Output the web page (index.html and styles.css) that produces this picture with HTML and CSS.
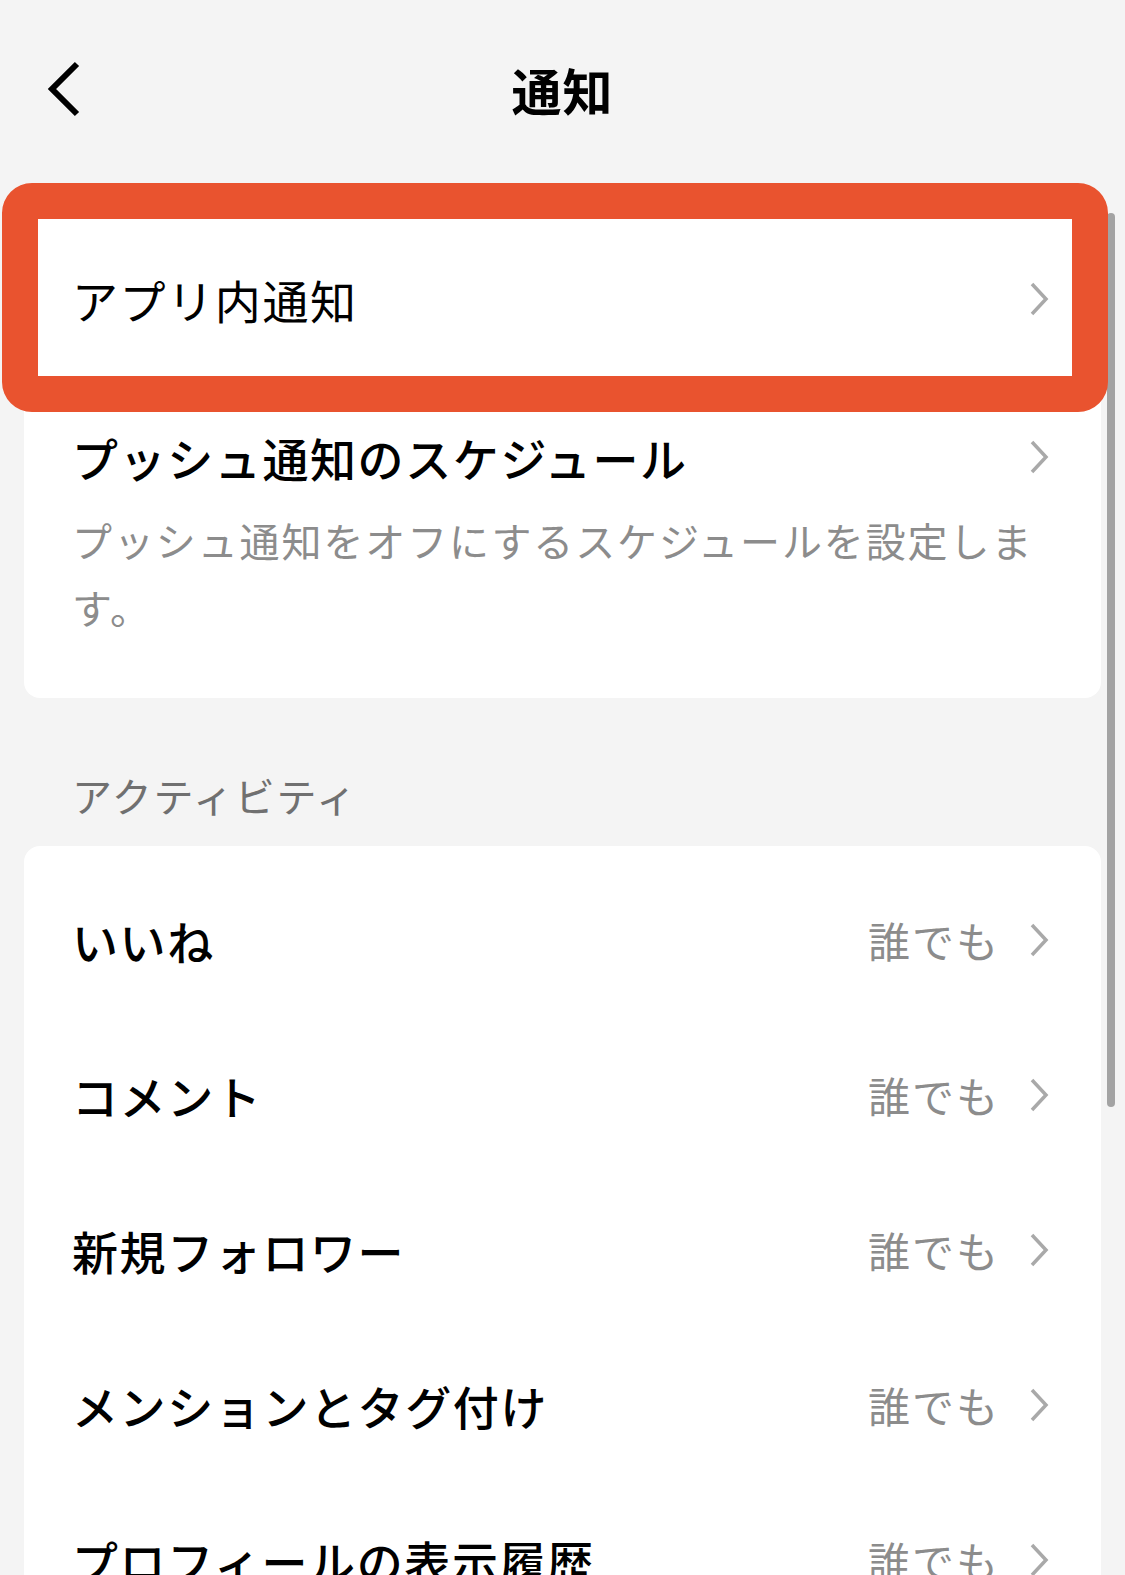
FILE: index.html
```html
<!DOCTYPE html>
<html lang="ja">
<head>
	<meta charset="UTF-8">
	<title>通知</title>
	<link rel="stylesheet" href="styles.css">
</head>
<body>
	<div class="page">
		<div class="header">
			<span class="back">
				<svg width="36" height="56" viewBox="0 0 36 56"><path d="M31 3 L6 28 L31 53" fill="none" stroke="#000" stroke-width="6"/></svg>
			</span>
			<h1 class="title">通知</h1>
			<span></span>
		</div>

		<div class="card first">
			<div class="row row-top">
				<span class="name light">アプリ内通知</span>
				<span class="arrow"><svg width="22" height="36" viewBox="0 0 22 36"><path d="M4 3 L18 18 L4 33" fill="none" stroke="#a9a9a9" stroke-width="3.5"/></svg></span>
			</div>
			<div class="row-desc">
				<div class="desc-head">
					<span class="name">プッシュ通知のスケジュール</span>
					<span class="arrow"><svg width="22" height="36" viewBox="0 0 22 36"><path d="M4 3 L18 18 L4 33" fill="none" stroke="#a9a9a9" stroke-width="3.5"/></svg></span>
				</div>
				<p class="desc">プッシュ通知をオフにするスケジュールを設定します。</p>
			</div>
			<span class="mark"></span>
		</div>

		<div class="section">アクティビティ</div>

		<div class="card list">
			<div class="row">
				<span class="name">いいね</span>
				<span class="side">誰でも<svg width="22" height="36" viewBox="0 0 22 36"><path d="M4 3 L18 18 L4 33" fill="none" stroke="#a9a9a9" stroke-width="3.5"/></svg></span>
			</div>
			<div class="row">
				<span class="name">コメント</span>
				<span class="side">誰でも<svg width="22" height="36" viewBox="0 0 22 36"><path d="M4 3 L18 18 L4 33" fill="none" stroke="#a9a9a9" stroke-width="3.5"/></svg></span>
			</div>
			<div class="row">
				<span class="name">新規フォロワー</span>
				<span class="side">誰でも<svg width="22" height="36" viewBox="0 0 22 36"><path d="M4 3 L18 18 L4 33" fill="none" stroke="#a9a9a9" stroke-width="3.5"/></svg></span>
			</div>
			<div class="row">
				<span class="name">メンションとタグ付け</span>
				<span class="side">誰でも<svg width="22" height="36" viewBox="0 0 22 36"><path d="M4 3 L18 18 L4 33" fill="none" stroke="#a9a9a9" stroke-width="3.5"/></svg></span>
			</div>
			<div class="row">
				<span class="name">プロフィールの表示履歴</span>
				<span class="side">誰でも<svg width="22" height="36" viewBox="0 0 22 36"><path d="M4 3 L18 18 L4 33" fill="none" stroke="#a9a9a9" stroke-width="3.5"/></svg></span>
			</div>
		</div>

		<span class="scrollbar"></span>
	</div>
</body>
</html>
```

FILE: styles.css
```css
*{
	margin: 0;
	padding: 0;
	box-sizing: border-box;
}
body{
	background: #f4f4f4;
	font-family: "Noto Sans CJK JP", "Noto Sans", sans-serif;
	color: #000;
}
.page{
	position: relative;
	height: 1575px;
	overflow: hidden;
}
.header{
	height: 178px;
	display: grid;
	grid-template-columns: 1fr auto 1fr;
	align-items: center;
	padding: 0 46px;
}
.back svg{
	display: block;
}
.title{
	font-size: 50px;
	font-weight: 700;
	line-height: 60px;
	letter-spacing: 1px;
}
.card{
	background: #fff;
	margin: 0 24px;
	border-radius: 16px;
}
.first{
	position: relative;
	margin-top: 34px;
}
.row{
	height: 155px;
	display: flex;
	align-items: center;
	justify-content: space-between;
	padding: 0 51px 0 48px;
}
.row-top{
	height: 174px;
}
.name{
	font-size: 46px;
	font-weight: 500;
	letter-spacing: 1.6px;
	line-height: 60px;
}
.light{
	font-weight: 400;
}
.arrow svg,
.side svg{
	display: block;
}
.row-desc{
	padding: 41px 51px 57px 48px;
}
.desc-head{
	display: flex;
	align-items: center;
	justify-content: space-between;
}
.desc{
	margin-top: 20px;
	font-size: 40px;
	line-height: 67px;
	letter-spacing: 1.9px;
	color: #8c8c8c;
	padding-right: 10px;
}
.mark{
	position: absolute;
	left: -22px;
	top: -29px;
	width: 1106px;
	height: 229px;
	border: 36px solid #e9532f;
	border-radius: 30px;
	z-index: 2;
}
.section{
	padding: 69px 72px 23px;
	font-size: 40px;
	line-height: 56px;
	letter-spacing: 1.8px;
	color: #707070;
}
.list{
	padding-top: 16px;
}
.side{
	display: flex;
	align-items: center;
	gap: 28px;
	font-size: 42px;
	color: #8c8c8c;
	letter-spacing: 2px;
}
.scrollbar{
	position: absolute;
	left: 1107px;
	top: 213px;
	width: 8px;
	height: 894px;
	border-radius: 4px;
	background: #a3a3a3;
	z-index: 1;
}
```
